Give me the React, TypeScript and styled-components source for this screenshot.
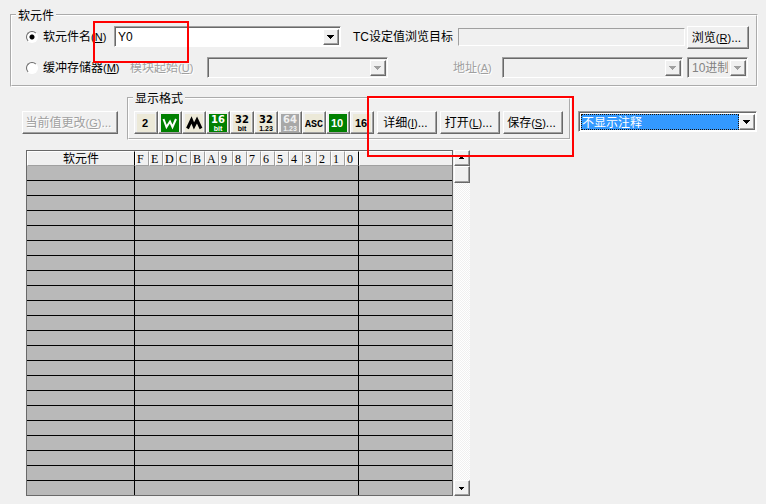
import React, { useState } from "react";
import styled, { createGlobalStyle, css } from "styled-components";

const face = "#f0f0f0";
const shadow = "#a0a0a0";
const dark = "#696969";
const green = "#008000";
const uiFont = '"Liberation Sans", "Noto Sans CJK SC", sans-serif';

const GlobalStyle = createGlobalStyle`
  *, *::before, *::after { box-sizing: border-box; }
  body { margin: 0; background: ${face}; color: #000; font: 12px/14px ${uiFont}; }
  button, input, select { font: inherit; color: inherit; margin: 0; border-radius: 0; }
`;

const raised = css`
  border: 1px solid;
  border-color: #fff ${dark} ${dark} #fff;
  box-shadow: inset -1px -1px 0 ${shadow};
  background: ${face};
`;

const disabledText = css`
  color: ${shadow};
  text-shadow: 1px 1px 0 #fff;
`;

const Page = styled.main`
  padding: 8px 8px 8px 10px;
`;

const Group = styled.fieldset`
  position: relative;
  margin: 0;
  min-width: 0;
  border: 2px groove #fff;
`;

const DeviceGroup = styled(Group)`
  padding: 4px 7px 6px 14px;
`;

const FormatGroup = styled(Group)`
  flex: none;
  display: flex;
  padding: 6px 6px 4px 5px;
`;

const Legend = styled.legend`
  padding: 0 2px;
  margin-left: -10px;
  height: 14px;
  line-height: 16px;
`;

const FormatLegend = styled(Legend)`
  margin-left: -1px;
`;

const Row = styled.div`
  display: flex;
  align-items: flex-start;
  white-space: nowrap;
  & + & { margin-top: 8px; }
`;

const RadioLabel = styled.label<{ $width: number }>`
  flex: none;
  display: flex;
  align-items: center;
  gap: 5px;
  height: 22px;
  width: ${(p) => p.$width}px;
`;

const Radio = styled.input`
  appearance: none;
  width: 12px;
  height: 12px;
  border: 1px solid;
  border-color: ${dark} #fff #fff ${dark};
  border-radius: 50%;
  background: #fff;
  &:checked { background: radial-gradient(circle, #000 0 2px, #fff 3px); }
`;

const FieldLabel = styled.label<{ $width: number; $disabled?: boolean }>`
  flex: none;
  width: ${(p) => p.$width}px;
  line-height: 22px;
  ${(p) => p.$disabled && disabledText}
`;

const TargetLabel = styled(FieldLabel)`
  margin-left: 12px;
`;

const Key = styled.span`
  font-size: 11px;
  u { text-underline-offset: 1px; }
`;

const Box = styled.div<{ $width?: number; $disabled?: boolean }>`
  flex: ${(p) => (p.$width ? "none" : "1 1 0")};
  width: ${(p) => (p.$width ? `${p.$width}px` : "auto")};
  min-width: 60px;
  display: flex;
  height: 21px;
  border: 1px solid;
  border-color: ${shadow} #fff #fff ${shadow};
  box-shadow: inset 1px 1px 0 ${dark};
  padding: 2px 1px 1px 2px;
  background: ${(p) => (p.$disabled ? face : "#fff")};
`;

const BoxInput = styled.input`
  flex: 1;
  min-width: 0;
  border: 0;
  padding: 0 1px 1px;
  background: transparent;
  outline: none;
`;

const BoxSelect = styled.select<{ $selected?: boolean }>`
  appearance: none;
  flex: 1;
  min-width: 0;
  border: 0;
  padding: 0 2px;
  background: transparent;
  outline: none;
  &:disabled { color: #838383; opacity: 1; }
  ${(p) => p.$selected && css`
    padding: 1px 0 0;
    border: 1px dotted #201000;
    background: #3399ff;
    color: #fff;
  `}
`;

const ArrowButton = styled.button`
  ${raised}
  flex: none;
  display: grid;
  place-items: center;
  width: 16px;
  padding: 0;
`;

const Push = styled.button<{ $width: number }>`
  ${raised}
  flex: none;
  width: ${(p) => p.$width}px;
  height: 23px;
  padding: 0 3px 0 0;
  white-space: nowrap;
  &:disabled { ${disabledText} }
`;

const Target = styled.input`
  flex: 1 1 0;
  min-width: 60px;
  height: 18px;
  margin: 2px 2px 0 0;
  border: 1px solid;
  border-color: ${shadow} #fff #fff ${shadow};
  background: ${face};
`;

const AddressArea = styled.div`
  flex: 1 1 0;
  min-width: 0;
  display: flex;
  margin: 0 1px 0 65px;
  & > ${Box} + ${Box} { margin-left: 4px; }
`;

const Toolbar = styled.div`
  display: flex;
  align-items: flex-start;
  margin: 4px 1px 0 12px;
`;

const ToolbarSide = styled.div<{ $grow?: boolean }>`
  display: flex;
  flex: ${(p) => (p.$grow ? "1 1 0" : "none")};
  padding-top: 20px;
  margin: ${(p) => (p.$grow ? "0 0 0 7px" : "0 9px 0 0")};
`;

const FormatButton = styled.button`
  ${raised}
  flex: none;
  display: block;
  width: 24px;
  height: 23px;
  padding: 1px 0 0 2px;
  svg { display: block; overflow: visible; }
`;

const Actions = styled.div`
  display: flex;
  gap: 3px;
  margin-left: 3px;
`;

const Highlight = styled.span`
  position: absolute;
  z-index: 2;
  border: 2px solid #f00;
  pointer-events: none;
`;

const NameHighlight = styled(Highlight)`
  left: 81px;
  top: -1px;
  width: 96px;
  height: 42px;
`;

const ActionHighlight = styled(Highlight)`
  left: 238px;
  top: -9px;
  width: 207px;
  height: 61px;
`;

const Monitor = styled.section`
  display: flex;
  gap: 1px;
  margin: 10px 0 0 16px;
`;

const Grid = styled.table`
  flex: none;
  width: 427px;
  table-layout: fixed;
  border-collapse: separate;
  border-spacing: 0;
  border: 1px solid ${dark};
  background: #b9b9b9;
`;

const Col = styled.col<{ $width: number }>`
  width: ${(p) => p.$width}px;
`;

const Head = styled.th<{ $line?: "bit" | "edge" }>`
  height: 15px;
  padding: 2px 0 0;
  font-weight: normal;
  line-height: 11px;
  background: ${face};
  border-top: 1px solid #fff;
  border-left: 1px solid #fff;
  border-bottom: 1px solid ${shadow};
  ${(p) => p.$line && css`border-right: 1px solid ${p.$line === "edge" ? "#000" : shadow};`}
`;

const BitHead = styled(Head)`
  padding-left: 1px;
  text-align: left;
  font-family: "Liberation Serif", serif;
`;

const Cell = styled.td`
  height: 15px;
  padding: 0;
  border-bottom: 1px solid #000;
  &:not(:last-child) { border-right: 1px solid #000; }
  tr:last-child > & { height: 14px; border-bottom: 0; }
`;

const Scroll = styled.div`
  display: flex;
  flex-direction: column;
  width: 16px;
  background: repeating-conic-gradient(#fff 0 25%, ${face} 0 50%) 0 0 / 2px 2px;
`;

const ScrollButton = styled(ArrowButton)`
  height: 16px;
`;

const Thumb = styled.div`
  ${raised}
  height: 17px;
  margin-bottom: auto;
`;

function Arrow({ disabled }: { disabled?: boolean }) {
  return (
    <svg width="8" height="4" viewBox="0 0 8 4" shapeRendering="crispEdges" aria-hidden="true">
      <path d="M0 0h7v1h-1v1h-1v1h-1v1h-1v-1h-1v-1h-1v-1h-1z" fill={disabled ? shadow : "#000"} />
    </svg>
  );
}

function ScrollArrow({ up }: { up?: boolean }) {
  return (
    <svg width="6" height="4" viewBox="0 0 6 4" shapeRendering="crispEdges" aria-hidden="true">
      <path d={up ? "M0 3h5v-1h-1v-1h-1v-1h-1v1h-1v1h-1z" : "M0 1h5v1h-1v1h-1v1h-1v-1h-1v-1h-1z"} />
    </svg>
  );
}

function AccessKey({ k }: { k: string }) {
  return <Key>(<u>{k}</u>)</Key>;
}

type Format = { name: string; top?: string; bottom?: string; word?: string; wave?: string; tone?: "green" | "gray" };

const formats: Format[] = [
  { name: "2进制", word: "2" },
  { name: "字", wave: "M2.5 5L5.5 13L9 7.5L11.5 13L15 5", tone: "green" },
  { name: "多点", wave: "M2.5 14.5L6.5 6L9 12L12 6L16 14.5" },
  { name: "16位整数", top: "16", bottom: "bit", tone: "green" },
  { name: "32位整数", top: "32", bottom: "bit" },
  { name: "32位实数", top: "32", bottom: "1.23" },
  { name: "64位实数", top: "64", bottom: "1.23", tone: "gray" },
  { name: "字符串", word: "ASC" },
  { name: "10进制", word: "10", tone: "green" },
  { name: "16进制", word: "16" },
];

function FormatIcon({ format }: { format: Format }) {
  const { top, bottom, word, wave, tone } = format;
  const ink = tone === "green" ? "#fff" : tone === "gray" ? face : "#000";
  const paper = tone === "green" ? green : tone === "gray" ? "#a8a8a8" : "#ece9d8";
  return (
    <svg width="18" height="18" viewBox="0 0 18 18" aria-hidden="true">
      <rect width="18" height="18" fill={paper} />
      {wave && <path d={wave} fill="none" stroke={ink} strokeWidth={tone ? 2 : 3} />}
      <g fill={ink} textAnchor="middle" fontWeight="bold">
        {top && <text x="9" y="9" fontSize="10" fontFamily="DejaVu Sans">{top}</text>}
        {bottom && <text x="9" y="17" fontSize="7" fontFamily="Liberation Sans">{bottom}</text>}
        {word === "ASC" && <text x="9" y="13" fontSize="10" fontFamily="Liberation Mono">{word}</text>}
        {word && word !== "ASC" && <text x="8" y="13" fontSize="11" fontFamily="Liberation Sans">{word}</text>}
      </g>
    </svg>
  );
}

const bits = "FEDCBA9876543210".split("");
const rows = Array.from({ length: 22 }, (_, i) => i);

export default function App() {
  const [source, setSource] = useState("device");
  const [device, setDevice] = useState("Y0");

  return (
    <Page>
      <GlobalStyle />
      <DeviceGroup>
        <Legend>软元件</Legend>
        <Row>
          <RadioLabel $width={88}>
            <Radio type="radio" name="source" checked={source === "device"} onChange={() => setSource("device")} />
            <span>软元件名<AccessKey k="N" /></span>
          </RadioLabel>
          <Box $width={227}>
            <BoxInput aria-label="软元件名" value={device} onChange={(e) => setDevice(e.target.value)} />
            <ArrowButton type="button" aria-label="软元件列表"><Arrow /></ArrowButton>
          </Box>
          <TargetLabel $width={105} htmlFor="target">TC设定值浏览目标</TargetLabel>
          <Target id="target" readOnly />
          <Push type="button" $width={62}>浏览<AccessKey k="R" />...</Push>
        </Row>
        <Row>
          <RadioLabel $width={104}>
            <Radio type="radio" name="source" checked={source === "buffer"} onChange={() => setSource("buffer")} />
            <span>缓冲存储器<AccessKey k="M" /></span>
          </RadioLabel>
          <FieldLabel $width={77} $disabled htmlFor="module">模块起始<AccessKey k="U" /></FieldLabel>
          <Box $width={181} $disabled>
            <BoxSelect id="module" disabled />
            <ArrowButton as="span"><Arrow disabled /></ArrowButton>
          </Box>
          <AddressArea>
            <FieldLabel $width={49} $disabled htmlFor="address">地址<AccessKey k="A" /></FieldLabel>
            <Box $disabled>
              <BoxSelect id="address" disabled />
              <ArrowButton as="span"><Arrow disabled /></ArrowButton>
            </Box>
            <Box $width={61} $disabled>
              <BoxSelect aria-label="进制" disabled><option>10进制</option></BoxSelect>
              <ArrowButton as="span"><Arrow disabled /></ArrowButton>
            </Box>
          </AddressArea>
        </Row>
        <NameHighlight />
      </DeviceGroup>

      <Toolbar>
        <ToolbarSide>
          <Push type="button" $width={96} disabled>当前值更改<AccessKey k="G" />...</Push>
        </ToolbarSide>
        <FormatGroup>
          <FormatLegend>显示格式</FormatLegend>
          {formats.map((f) => (
            <FormatButton type="button" key={f.name} aria-label={f.name} disabled={f.tone === "gray"}>
              <FormatIcon format={f} />
            </FormatButton>
          ))}
          <Actions>
            <Push type="button" $width={60}>详细<AccessKey k="I" />...</Push>
            <Push type="button" $width={60}>打开<AccessKey k="L" />...</Push>
            <Push type="button" $width={60}>保存<AccessKey k="S" />...</Push>
          </Actions>
          <ActionHighlight />
        </FormatGroup>
        <ToolbarSide $grow>
          <Box>
            <BoxSelect aria-label="注释显示" $selected><option>不显示注释</option></BoxSelect>
            <ArrowButton as="span"><Arrow /></ArrowButton>
          </Box>
        </ToolbarSide>
      </Toolbar>

      <Monitor>
        <Grid>
          <colgroup>
            <Col $width={108} />
            {bits.map((b) => <Col key={b} $width={14} />)}
            <Col $width={93} />
          </colgroup>
          <thead>
            <tr>
              <Head $line="edge">软元件</Head>
              {bits.map((b) => <BitHead key={b} $line={b === "0" ? "edge" : "bit"}>{b}</BitHead>)}
              <Head aria-label="当前值" />
            </tr>
          </thead>
          <tbody>
            {rows.map((r) => <tr key={r}><Cell /><Cell colSpan={16} /><Cell /></tr>)}
          </tbody>
        </Grid>
        <Scroll>
          <ScrollButton type="button" aria-label="向上滚动"><ScrollArrow up /></ScrollButton>
          <Thumb />
          <ScrollButton type="button" aria-label="向下滚动"><ScrollArrow /></ScrollButton>
        </Scroll>
      </Monitor>
    </Page>
  );
}
